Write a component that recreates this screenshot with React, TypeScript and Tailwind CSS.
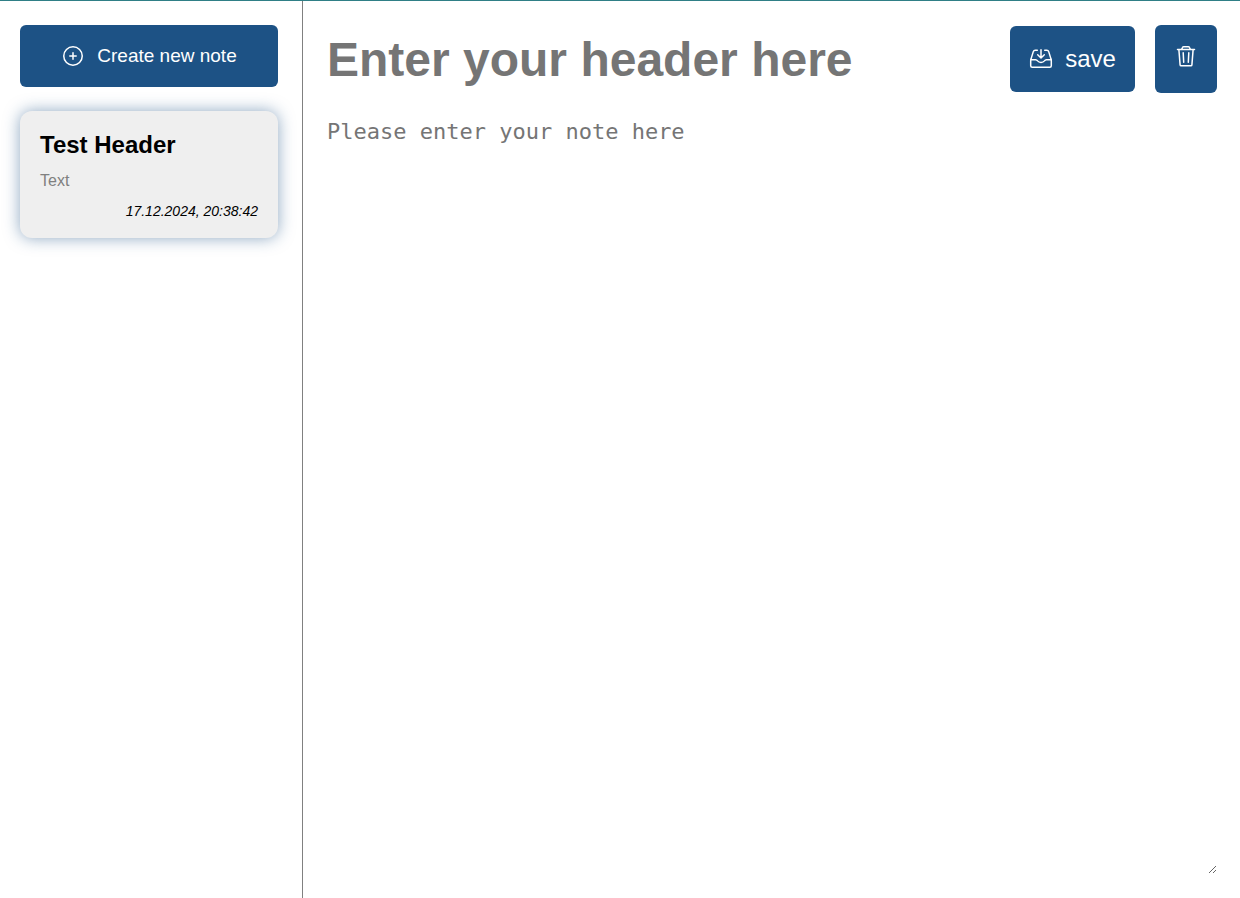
import type { ReactNode } from "react";

const notes = [{ title: "Test Header", text: "Text", date: "17.12.2024, 20:38:42" }];

function Icon({ children }: { children: ReactNode }) {
  return (
    <svg
      viewBox="0 0 24 24"
      className="size-6 shrink-0"
      fill="none"
      stroke="currentColor"
      strokeWidth="1.5"
      strokeLinecap="round"
      strokeLinejoin="round"
      aria-hidden="true"
    >
      {children}
    </svg>
  );
}

function PlusCircle() {
  return (
    <Icon>
      <circle cx="12" cy="12" r="9.25" />
      <path d="M12 8.8v6.4M8.8 12h6.4" />
    </Icon>
  );
}

function InboxIn() {
  return (
    <Icon>
      <path d="M8.3 3.2H6.2a2 2 0 0 0-1.9 1.4L2.2 11.4a6 6 0 0 0-.5 2.4v4.9a1.5 1.5 0 0 0 1.5 1.5h17.6a1.5 1.5 0 0 0 1.5-1.5v-4.9a6 6 0 0 0-.5-2.4L19.7 4.6a2 2 0 0 0-1.9-1.4h-2.1" />
      <path d="M2 12.7h4.6c.9 0 1.5.5 2 1.2.7.9 1.9 1.5 3.4 1.5s2.7-.6 3.4-1.5c.5-.7 1.1-1.2 2-1.2H22" />
      <path d="M12 2.8v8M8.7 7.8l3.3 3.2 3.3-3.2" />
    </Icon>
  );
}

function Trash() {
  return (
    <Icon>
      <path d="M3.5 5.6h17M7.6 5.4l.9-1.9a1.3 1.3 0 0 1 1.2-.8h4.6a1.3 1.3 0 0 1 1.2.8l.9 1.9" />
      <path d="M4.9 5.8l1.2 15.1a1 1 0 0 0 1 .9h9.8a1 1 0 0 0 1-.9L19.1 5.8" />
      <path d="M9.2 8.8l.5 9.4M14.8 8.8l-.5 9.4" />
    </Icon>
  );
}

export default function App() {
  return (
    <div className="flex h-screen border-t border-[#2f7f86] bg-white font-['Liberation_Sans',Arial,sans-serif] text-black">
      <aside className="w-[303px] shrink-0 border-r border-[#808080] pt-6 pr-6 pl-5">
        <button className="flex h-[62px] w-full items-center justify-center gap-3 rounded-md bg-[#1d5285] text-[19px] text-white">
          <PlusCircle />
          Create new note
        </button>
        <ul className="mt-6">
          {notes.map((n) => (
            <li key={n.date} className="rounded-xl bg-[#efefef] px-5 pt-5 pb-[19px] shadow-[0_0_16px_#1d528580]">
              <h2 className="text-2xl leading-7 font-bold">{n.title}</h2>
              <p className="mt-3 text-base leading-5 text-[#808080]">{n.text}</p>
              <p className="mt-3 text-right text-sm leading-4 italic">{n.date}</p>
            </li>
          ))}
        </ul>
      </aside>
      <main className="flex min-w-0 flex-1 flex-col py-6 pr-[23px] pl-6">
        <div className="flex items-center gap-5">
          <input
            aria-label="Header"
            placeholder="Enter your header here"
            className="min-w-0 flex-1 text-5xl font-bold outline-none placeholder:text-[#757575]"
          />
          <button className="flex h-[66px] w-[125px] items-center justify-center gap-3 rounded-md bg-[#1d5285] text-2xl text-white">
            <InboxIn />
            save
          </button>
          <button
            aria-label="Delete"
            className="flex h-[68px] w-[62px] items-start justify-center rounded-md bg-[#1d5285] pt-[19px] text-white"
          >
            <Trash />
          </button>
        </div>
        <textarea
          aria-label="Note"
          placeholder="Please enter your note here"
          className="mt-6 w-full flex-1 font-['DejaVu_Sans_Mono',monospace] text-[22px] leading-[30px] outline-none placeholder:text-[#757575]"
        />
      </main>
    </div>
  );
}
